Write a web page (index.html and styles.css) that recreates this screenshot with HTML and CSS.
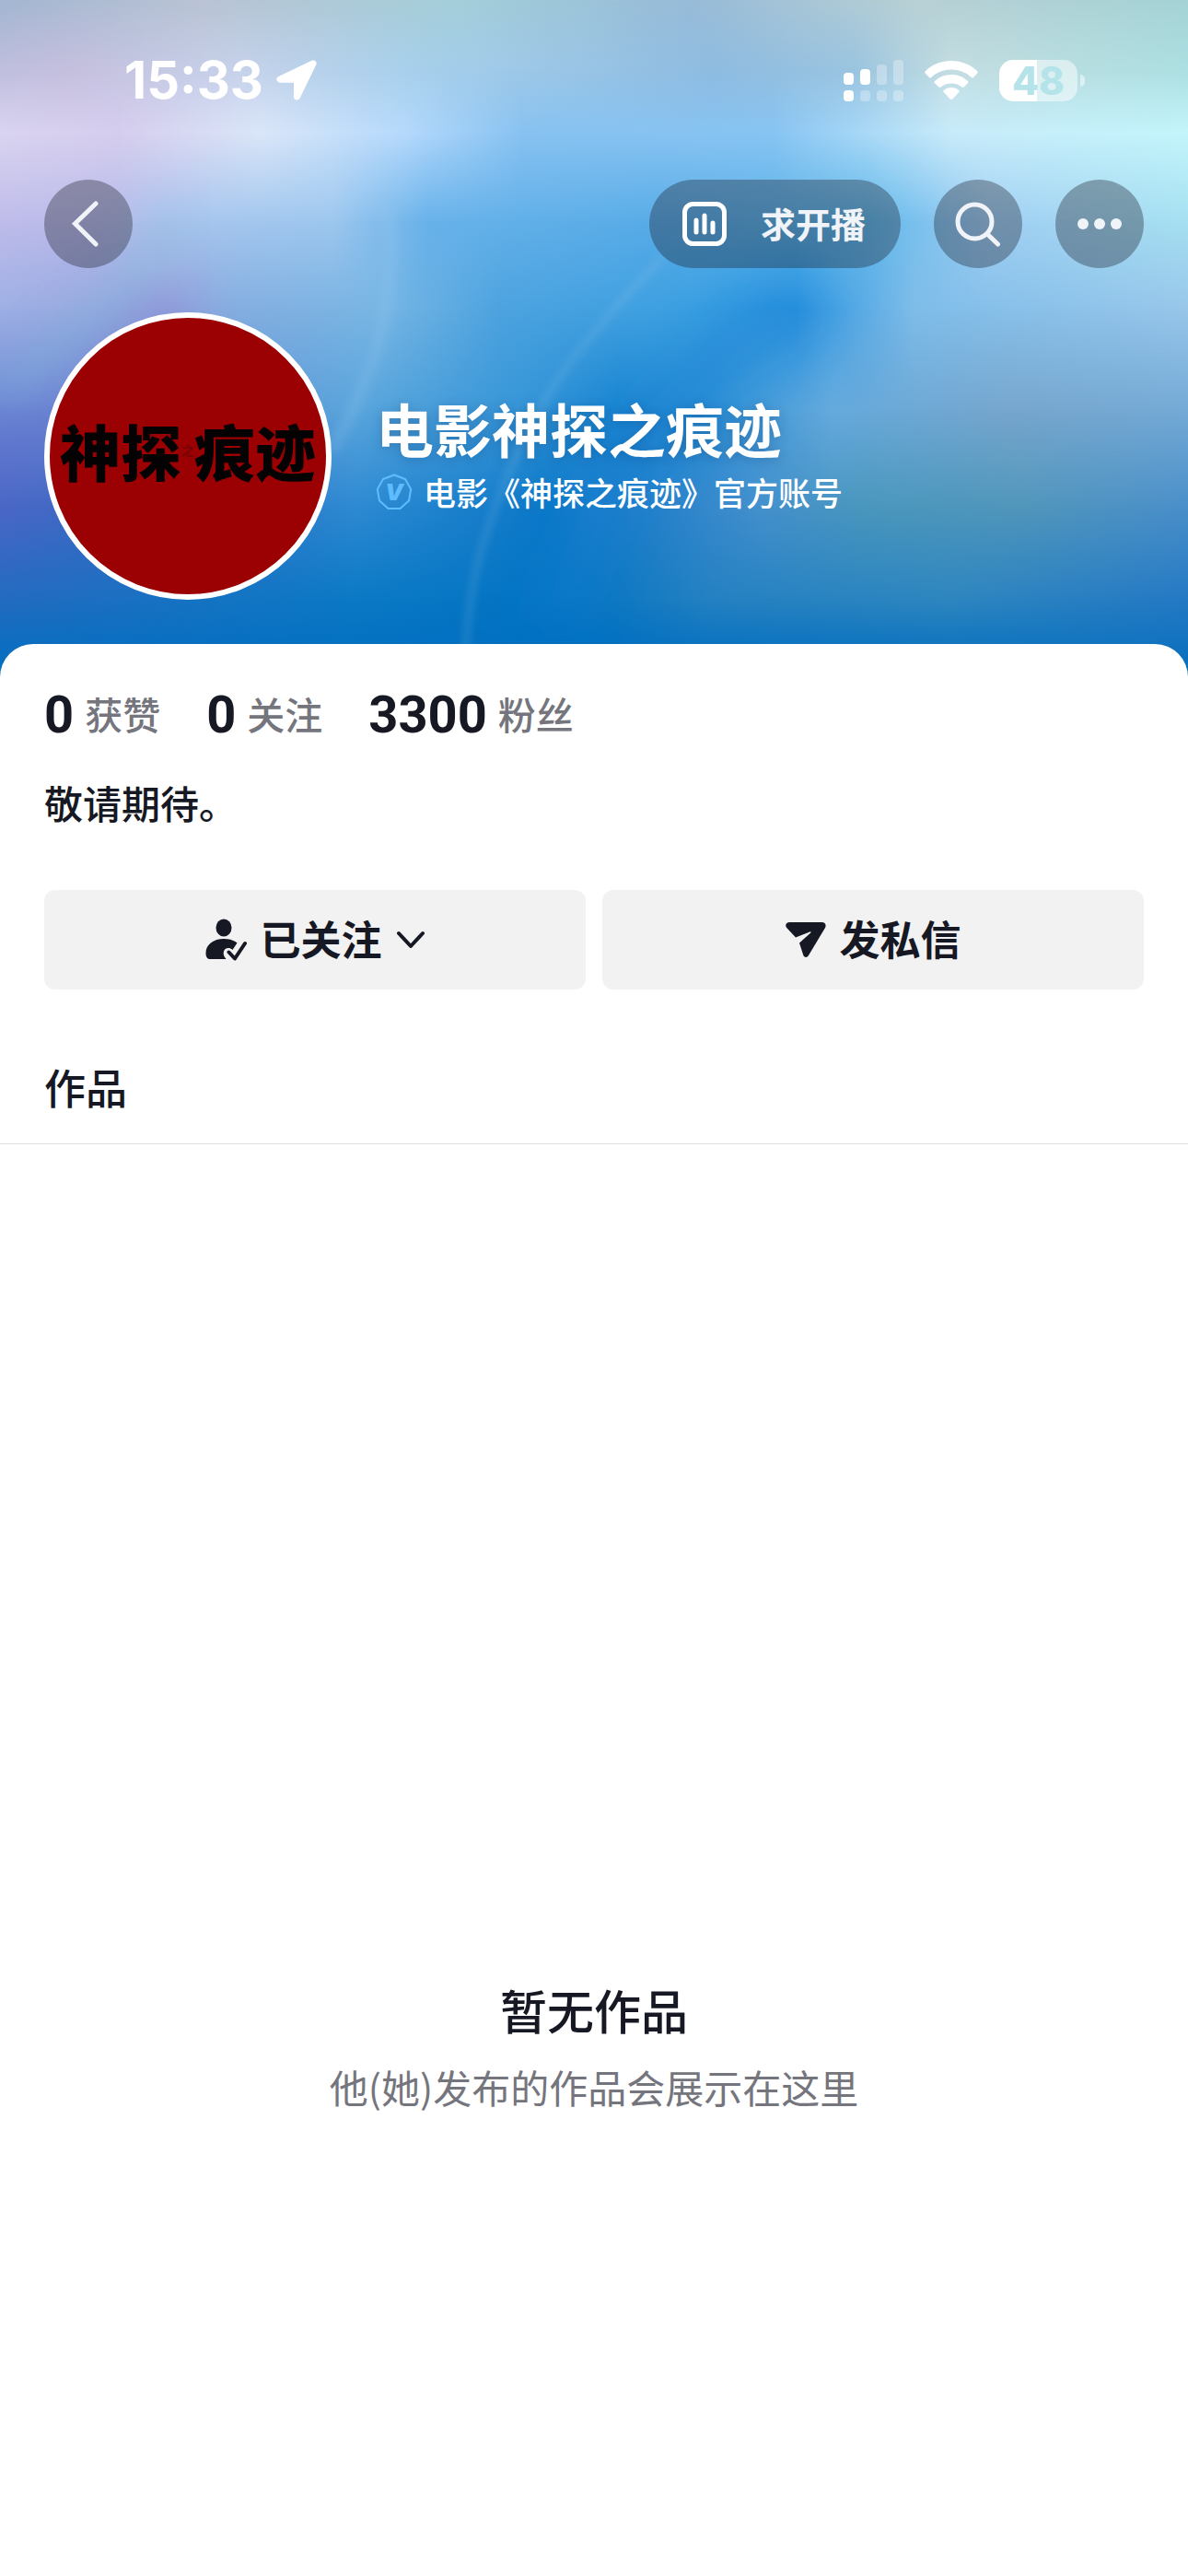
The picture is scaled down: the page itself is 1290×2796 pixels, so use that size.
FILE: index.html
```
<!DOCTYPE html>
<html lang="zh-CN">
<head>
  <meta charset="utf-8">
  <meta name="viewport" content="width=device-width, initial-scale=1">
  <title>电影神探之痕迹</title>
  <link rel="stylesheet" href="styles.css">
</head>
<body>
  <header class="hero">
    <svg class="hero-bg" viewBox="0 0 1290 735" preserveAspectRatio="none" aria-hidden="true">
      <defs>
        <!-- 横向色带 -->
        <linearGradient id="r0"><stop offset="0" stop-color="#a3b6d2"/><stop offset=".17" stop-color="#b9c3d4"/><stop offset=".38" stop-color="#a4cfd9"/><stop offset=".58" stop-color="#97bbd8"/><stop offset=".77" stop-color="#b8d0d5"/><stop offset="1" stop-color="#a5d3d6"/></linearGradient>
        <linearGradient id="r1"><stop offset="0" stop-color="#bfbedd"/><stop offset=".06" stop-color="#c5bfde"/><stop offset=".2" stop-color="#c6d2ea"/><stop offset=".34" stop-color="#a8d0ec"/><stop offset=".6" stop-color="#8ebbe0"/><stop offset=".72" stop-color="#9ac4e0"/><stop offset=".8" stop-color="#c3dde1"/><stop offset="1" stop-color="#acdfe1"/></linearGradient>
        <linearGradient id="r2"><stop offset="0" stop-color="#d9d4f0"/><stop offset=".1" stop-color="#d6cdee"/><stop offset=".22" stop-color="#dae6f8"/><stop offset=".34" stop-color="#b5d9fc"/><stop offset=".44" stop-color="#87c2f1"/><stop offset=".65" stop-color="#87c4f3"/><stop offset=".8" stop-color="#c8ebfa"/><stop offset="1" stop-color="#c3f5fb"/></linearGradient>
        <linearGradient id="r3"><stop offset="0" stop-color="#bfbcea"/><stop offset=".08" stop-color="#b8bbea"/><stop offset=".18" stop-color="#a6c6ee"/><stop offset=".28" stop-color="#9dc7ee"/><stop offset=".36" stop-color="#68b2ea"/><stop offset=".55" stop-color="#58ace7"/><stop offset=".73" stop-color="#5fb7ea"/><stop offset=".83" stop-color="#a0cef3"/><stop offset="1" stop-color="#a6e0f1"/></linearGradient>
        <linearGradient id="r4"><stop offset="0" stop-color="#9eb0e5"/><stop offset=".14" stop-color="#949fdb"/><stop offset=".2" stop-color="#84aee0"/><stop offset=".32" stop-color="#78b6e4"/><stop offset=".42" stop-color="#4da3df"/><stop offset=".58" stop-color="#3b9fe1"/><stop offset=".67" stop-color="#2c94e0"/><stop offset=".77" stop-color="#7fbde9"/><stop offset="1" stop-color="#98c6ea"/></linearGradient>
        <linearGradient id="r5"><stop offset="0" stop-color="#6a83d3"/><stop offset=".14" stop-color="#6988d0"/><stop offset=".3" stop-color="#59a5dc"/><stop offset=".44" stop-color="#3595d7"/><stop offset=".52" stop-color="#1a85d1"/><stop offset=".6" stop-color="#2e90d6"/><stop offset=".7" stop-color="#65aadd"/><stop offset=".85" stop-color="#77a6cd"/><stop offset="1" stop-color="#74aad6"/></linearGradient>
        <linearGradient id="r6"><stop offset="0" stop-color="#4b66c6"/><stop offset=".15" stop-color="#316dc3"/><stop offset=".3" stop-color="#2e8ad2"/><stop offset=".46" stop-color="#0c78c8"/><stop offset=".55" stop-color="#2681cb"/><stop offset=".64" stop-color="#4490cd"/><stop offset=".73" stop-color="#4a97bd"/><stop offset=".86" stop-color="#5196bb"/><stop offset="1" stop-color="#4a8fca"/></linearGradient>
        <linearGradient id="r7"><stop offset="0" stop-color="#236bc0"/><stop offset=".3" stop-color="#0b79c5"/><stop offset=".47" stop-color="#0273c2"/><stop offset=".6" stop-color="#2581c2"/><stop offset=".8" stop-color="#2e86bf"/><stop offset="1" stop-color="#2479c4"/></linearGradient>
        <linearGradient id="r8"><stop offset="0" stop-color="#056fc0"/><stop offset=".5" stop-color="#006ec0"/><stop offset="1" stop-color="#0a70be"/></linearGradient>
        <!-- 纵向过渡 -->
        <linearGradient id="fade" x2="0" y2="1"><stop offset="0" stop-color="#000"/><stop offset="1" stop-color="#fff"/></linearGradient>
        <mask id="m1"><path fill="url(#fade)" d="M0 0h1290v75H0z"/><path fill="#fff" d="M0 75h1290v685H0z"/></mask>
        <mask id="m2"><path fill="url(#fade)" d="M0 75h1290v70H0z"/><path fill="#fff" d="M0 145h1290v615H0z"/></mask>
        <mask id="m3"><path fill="url(#fade)" d="M0 145h1290v95H0z"/><path fill="#fff" d="M0 240h1290v520H0z"/></mask>
        <mask id="m4"><path fill="url(#fade)" d="M0 240h1290v95H0z"/><path fill="#fff" d="M0 335h1290v425H0z"/></mask>
        <mask id="m5"><path fill="url(#fade)" d="M0 335h1290v110H0z"/><path fill="#fff" d="M0 445h1290v315H0z"/></mask>
        <mask id="m6"><path fill="url(#fade)" d="M0 445h1290v105H0z"/><path fill="#fff" d="M0 550h1290v210H0z"/></mask>
        <mask id="m7"><path fill="url(#fade)" d="M0 550h1290v100H0z"/><path fill="#fff" d="M0 650h1290v110H0z"/></mask>
        <mask id="m8"><path fill="url(#fade)" d="M0 650h1290v70H0z"/><path fill="#fff" d="M0 720h1290v40H0z"/></mask>
        <filter id="soft" x="-20%" y="-20%" width="140%" height="140%"><feGaussianBlur stdDeviation="24"/></filter>
        <filter id="thin" x="-20%" y="-20%" width="140%" height="140%"><feGaussianBlur stdDeviation="5"/></filter>
      </defs>
      <path fill="url(#r0)" d="M0 0h1290v760H0z"/>
      <path fill="url(#r1)" mask="url(#m1)" d="M0 0h1290v760H0z"/>
      <path fill="url(#r2)" mask="url(#m2)" d="M0 0h1290v760H0z"/>
      <path fill="url(#r3)" mask="url(#m3)" d="M0 0h1290v760H0z"/>
      <path fill="url(#r4)" mask="url(#m4)" d="M0 0h1290v760H0z"/>
      <path fill="url(#r5)" mask="url(#m5)" d="M0 0h1290v760H0z"/>
      <path fill="url(#r6)" mask="url(#m6)" d="M0 0h1290v760H0z"/>
      <path fill="url(#r7)" mask="url(#m7)" d="M0 0h1290v760H0z"/>
      <path fill="url(#r8)" mask="url(#m8)" d="M0 0h1290v760H0z"/>
      <!-- 光带 -->
      <path fill="none" stroke="#1480d2" stroke-width="60" opacity=".4" filter="url(#soft)" d="M880 330C760 380 660 480 600 680"/>
      <path fill="none" stroke="#7fc3dc" stroke-width="30" opacity=".5" filter="url(#soft)" d="M0 430C90 360 160 310 190 230"/>
      <path fill="none" stroke="#6a66cc" stroke-width="40" opacity=".2" filter="url(#soft)" d="M0 500C60 440 120 360 190 330"/>
      <path fill="none" stroke="#a4cbe6" stroke-width="5" opacity=".28" filter="url(#thin)" d="M720 280C620 380 580 440 550 520C520 590 505 650 505 740"/>
      <path fill="none" stroke="#9ccaf0" stroke-width="14" opacity=".2" filter="url(#thin)" d="M420 225C434 320 410 400 360 490"/>
    </svg>

    <div class="status">
      <div class="status-left">
        <span class="time">15:33</span>
        <svg width="44" height="44" viewBox="0 0 44 44" aria-hidden="true"><path fill="#fff" stroke="#fff" stroke-width="7" stroke-linejoin="round" d="M40 4 4 21.2h18.5V40z"/></svg>
      </div>
      <div class="status-right">
        <svg width="65" height="45" viewBox="0 0 65 45" fill="#fff" aria-hidden="true">
          <rect y="14" width="11" height="13" rx="4"/><rect x="18" y="10" width="11" height="17" rx="4"/>
          <rect x="36" y="5" width="11" height="22" rx="4" opacity=".3"/><rect x="54" width="11" height="27" rx="4" opacity=".3"/>
          <rect y="33" width="11" height="12" rx="4"/><g opacity=".3"><rect x="18" y="33" width="11" height="12" rx="4"/><rect x="36" y="33" width="11" height="12" rx="4"/><rect x="54" y="33" width="11" height="12" rx="4"/></g>
        </svg>
        <svg width="58" height="43" viewBox="0 0 58 43" fill="#fff" aria-hidden="true">
          <path d="M29 0C18 0 8 4 .8 11.200c-.8.8-.8 1.600-.1 2.300L5 18c.7.7 1.500.7 2.200 0C13 12.500 20.500 9.500 29 9.500s16 3 21.800 8.500c.7.7 1.500.7 2.200 0l4.300-4.500c.7-.7.7-1.500-.1-2.300C50 4 40 0 29 0z"/>
          <path d="M29 15c-7 0-13 2.500-17.800 7-.8.8-.8 1.500-.1 2.200l4.400 4.300c.7.7 1.400.7 2.200.1 3-2.600 7-4.100 11.300-4.100s8.300 1.500 11.300 4.100c.8.6 1.500.6 2.200-.1l4.400-4.300c.7-.7.7-1.400-.1-2.200C42 17.500 36 15 29 15z"/>
          <path d="M29 29c-3.200 0-6 1.100-8.200 3.100-.7.7-.7 1.300-.1 2l7 7.300c.9.900 1.700.9 2.600 0l7-7.300c.6-.7.6-1.300-.1-2C35 30.100 32.200 29 29 29z"/>
        </svg>
        <span class="battery">48</span>
      </div>
    </div>

    <nav class="nav">
      <button class="round" aria-label="返回">
        <svg width="96" height="96" viewBox="0 0 96 96" aria-hidden="true"><path d="M56 26 33.500 47.700 56 70"/></svg>
      </button>
      <div class="nav-right">
        <button class="ask">
          <svg width="48" height="48" viewBox="0 0 48 48" aria-hidden="true"><rect x="2.500" y="2.500" width="43" height="43" rx="9"/><path d="M15 20v13M24 15v18M33 23v10"/></svg>
          <span>求开播</span>
        </button>
        <button class="round" aria-label="搜索">
          <svg width="96" height="96" viewBox="0 0 96 96" aria-hidden="true"><circle cx="44.500" cy="45.500" r="18.500"/><path d="m58 59 11.500 11"/></svg>
        </button>
        <button class="round" aria-label="更多">
          <svg class="dots" width="96" height="96" viewBox="0 0 96 96" aria-hidden="true"><circle cx="30" cy="48" r="6"/><circle cx="48" cy="48" r="6"/><circle cx="66" cy="48" r="6"/></svg>
        </button>
      </div>
    </nav>

    <div class="profile">
      <div class="avatar"><span>神探</span><small>之</small><span>痕迹</span></div>
      <div class="info">
        <h1>电影神探之痕迹</h1>
        <p>
          <svg width="40" height="40" viewBox="0 0 40 40" aria-hidden="true"><path fill="none" stroke="#5fbcff" stroke-width="2" stroke-linejoin="round" d="m20 1.500 12 4.500 6.200 11-2.200 12.500-9.600 8.500H13.600L4 29.500 1.800 17 8 6z"/><text x="20" y="29" text-anchor="middle">V</text></svg>
          电影《神探之痕迹》官方账号
        </p>
      </div>
    </div>
  </header>

  <main class="sheet">
    <ul class="stats">
      <li><b>0</b><span>获赞</span></li>
      <li><b>0</b><span>关注</span></li>
      <li><b>3300</b><span>粉丝</span></li>
    </ul>
    <p class="bio">敬请期待。</p>
    <div class="actions">
      <button>
        <svg width="45" height="46" viewBox="0 0 45 46" aria-hidden="true"><ellipse cx="20" cy="10" rx="8.500" ry="9.500"/><path d="M20 22c-11 0-19.500 6-19.500 15.500 0 4 1.500 6.500 4.500 6.500h17.500c-3-3.500-3.500-7-2-9.500 2-3 6-3.200 9-.5l5-7.500C31 23.500 26 22 20 22z"/><path class="line" stroke-width="4" d="m25.500 36.500 6.500 7 11-16.500"/></svg>
        <span>已关注</span>
        <svg width="32" height="22" viewBox="0 0 32 22" aria-hidden="true"><path class="line" stroke-width="4" d="m3 4 13 14L29 4"/></svg>
      </button>
      <button>
        <svg width="44" height="40" viewBox="0 0 44 40" aria-hidden="true"><path d="M4.500 1h35c3.500 0 5 2.800 3.500 6L25 37c-1.500 2.800-5 2.600-5.800-.5L15 23.500l12-10.800c1-1 .5-1.700-.8-1.200L11 17.500 1.200 7C-1 4 .8 1 4.500 1z"/></svg>
        <span>发私信</span>
      </button>
    </div>
    <h2 class="tab">作品</h2>
    <section class="empty">
      <h3>暂无作品</h3>
      <p>他(她)发布的作品会展示在这里</p>
    </section>
  </main>
</body>
</html>
```

FILE: styles.css
```
* {
  box-sizing: border-box;
  margin: 0;
  padding: 0;
}
body {
  background: #fff;
  color: #161823;
  font-family: "Noto Sans CJK SC", sans-serif;
}
button {
  border: 0;
  color: inherit;
  font: inherit;
  cursor: pointer;
}
svg {
  flex: none;
}

/* 头部 */
.hero {
  position: relative;
  padding-bottom: 84px;
  color: #fff;
}
.hero-bg {
  position: absolute;
  top: 0;
  left: 0;
  width: 100%;
  height: 100%;
  z-index: -1;
}
.status {
  display: flex;
  justify-content: space-between;
  align-items: center;
  height: 174px;
  padding: 0 112px 0 135px;
}
.status-left {
  display: flex;
  align-items: center;
  gap: 14px;
}
.status-right {
  display: flex;
  align-items: center;
  gap: 23px;
}
.time {
  font: 700 56px/60px Inter, sans-serif;
}
.battery {
  position: relative;
  width: 85px;
  height: 45px;
  margin-right: 8px;
  border-radius: 15px;
  background: linear-gradient(90deg, #fff 48%, rgba(255, 255, 255, .5) 48%);
  color: #b5e3ea;
  font: 800 42px/45px Inter, sans-serif;
  text-align: center;
}
.battery::after {
  content: "";
  position: absolute;
  right: -8px;
  top: 16px;
  width: 5px;
  height: 13px;
  border-radius: 0 5px 5px 0;
  background: rgba(255, 255, 255, .5);
}

.nav {
  display: flex;
  justify-content: space-between;
  padding: 21px 48px 48px;
}
.nav-right {
  display: flex;
  gap: 36px;
}
.nav button {
  height: 96px;
  border-radius: 48px;
  background: rgba(22, 24, 35, .34);
  color: #f0f3f8;
}
.nav svg {
  display: block;
  fill: none;
  stroke: #f0f3f8;
  stroke-width: 5;
  stroke-linecap: round;
}
.nav .dots {
  fill: #f0f3f8;
  stroke: none;
}
.round {
  width: 96px;
}
.nav .ask {
  display: flex;
  align-items: center;
  gap: 37px;
  padding: 0 38px 0 36px;
  font-size: 38px;
  font-weight: 700;
}
.nav .ask svg {
  stroke: #fff;
}
.ask span,
.stats span,
.actions span {
  padding-bottom: 4px;
}

.profile {
  display: flex;
  align-items: center;
  gap: 48px;
  padding: 0 48px;
}
.avatar {
  display: flex;
  flex: none;
  align-items: center;
  justify-content: center;
  width: 312px;
  height: 312px;
  padding-bottom: 14px;
  border: 6px solid #fff;
  border-radius: 50%;
  background: #9b0003;
  color: #050203;
  font-size: 66px;
  font-weight: 900;
  line-height: 72px;
  white-space: nowrap;
}
.avatar small {
  color: #7c0204;
  font-size: 14px;
}
.info h1 {
  font-size: 63px;
  font-weight: 700;
  line-height: 78px;
  text-shadow: 0 2px 12px rgba(0, 40, 90, .25);
}
.info p {
  display: flex;
  align-items: center;
  gap: 12px;
  font-size: 35px;
  font-weight: 500;
  line-height: 62px;
}
.info text {
  fill: #5fbcff;
  font: italic 900 25px Inter, sans-serif;
}

/* 资料 */
.sheet {
  position: relative;
  margin-top: -36px;
  border-radius: 36px 36px 0 0;
  background: #fff;
}
.stats {
  display: flex;
  gap: 50px;
  padding: 39px 48px 0;
  list-style: none;
}
.stats li {
  display: flex;
  align-items: center;
  gap: 12px;
  color: #75757d;
  font-size: 41px;
  font-weight: 500;
  line-height: 68px;
}
.stats b {
  color: #161823;
  font: 700 56px/76px Roboto, sans-serif;
}
.bio {
  padding: 29px 48px 0;
  font-size: 42px;
  font-weight: 500;
  line-height: 56px;
}
.actions {
  display: grid;
  grid-template-columns: 1fr 1fr;
  gap: 18px;
  padding: 67px 48px 0;
}
.actions button {
  display: flex;
  align-items: center;
  justify-content: center;
  gap: 15px;
  height: 108px;
  border-radius: 12px;
  background: #f2f2f2;
  font-size: 44px;
  font-weight: 700;
}
.actions svg {
  fill: #161823;
}
.actions .line {
  fill: none;
  stroke: #161823;
  stroke-linecap: round;
  stroke-linejoin: round;
}
.tab {
  padding: 74px 48px 29px;
  border-bottom: 1px solid #e3e3e5;
  font-size: 45px;
  font-weight: 500;
  line-height: 64px;
}
.empty {
  padding: 901px 48px 200px;
  text-align: center;
}
.empty h3 {
  font-size: 51px;
  font-weight: 500;
  line-height: 76px;
}
.empty p {
  padding-top: 16px;
  color: #75757d;
  font-size: 42px;
  line-height: 60px;
}
```
